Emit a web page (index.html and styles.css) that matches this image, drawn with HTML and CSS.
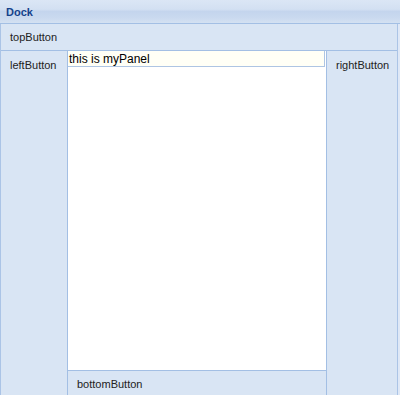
FILE: index.html
```html
<!DOCTYPE html>
<html lang="en">

<head>
  <meta charset="UTF-8">
  <title>Dock</title>
  <link rel="stylesheet" href="styles.css">
</head>

<body>
  <div class="dock">
    <div class="dock-header">Dock</div>
    <div class="dock-body">
      <div class="top-button">topButton</div>
      <div class="middle">
        <div class="left-button">leftButton</div>
        <div class="center">
          <div class="my-panel">
            <div class="panel-title">this is myPanel</div>
          </div>
          <div class="bottom-button">bottomButton</div>
        </div>
        <div class="right-button">rightButton</div>
      </div>
    </div>
  </div>
</body>

</html>
```

FILE: styles.css
```css
body {
  margin: 0;
  font-family: "Liberation Sans", Arial, sans-serif;
  font-size: 11px;
  color: #222;
}

.dock {
  width: 400px;
  height: 395px;
  display: flex;
  flex-direction: column;
  overflow: hidden;
  background-color: #dfe8f6;
}

.dock-header {
  height: 24px;
  box-sizing: border-box;
  padding: 6px 0 0 6px;
  font-weight: bold;
  font-size: 11px;
  color: #15428b;
  border-bottom: 1px solid #a3bfe4;
  background: linear-gradient(#dbe6f5 0%, #d3e0f2 40%, #c4d5ed 50%, #c9d9ef 75%, #d4e1f2 100%);
}

.dock-body {
  flex: 1;
  display: flex;
  flex-direction: column;
  margin-right: 2px;
  border-left: 1px solid #abc4e6;
  border-right: 1px solid #abc4e6;
  background-color: #d9e5f4;
}

.top-button {
  height: 27px;
  box-sizing: border-box;
  padding: 7px 0 0 9px;
  border-bottom: 1px solid #a3bfe4;
}

.middle {
  flex: 1;
  display: flex;
}

.left-button {
  width: 67px;
  padding: 8px 0 0 9px;
  box-sizing: border-box;
  border-right: 1px solid #a3bfe4;
}

.center {
  flex: 1;
  display: flex;
  flex-direction: column;
  border-right: 1px solid #a3bfe4;
}

.my-panel {
  flex: 1;
  background-color: #fff;
}

.panel-title {
  height: 16px;
  box-sizing: border-box;
  padding: 1px 0 0 1px;
  margin-right: 1px;
  font-size: 12px;
  color: #000;
  background-color: #fffff6;
  border-right: 1px solid #aec5e3;
  border-bottom: 1px solid #aec5e3;
}

.bottom-button {
  height: 25px;
  box-sizing: border-box;
  padding: 7px 0 0 9px;
  border-top: 1px solid #a3bfe4;
}

.right-button {
  width: 70px;
  padding: 8px 0 0 9px;
  box-sizing: border-box;
}
```
